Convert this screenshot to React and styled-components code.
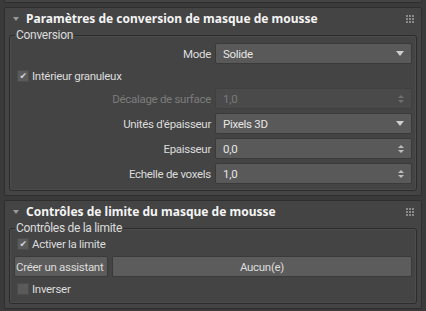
import styled, { createGlobalStyle } from "styled-components";

const Global = createGlobalStyle`
  html, body {
    margin: 0;
    padding: 0;
    background: #3a3a3a;
  }
  body {
    font-family: Roboto, "Noto Sans", sans-serif;
    font-size: 11.5px;
    letter-spacing: -0.3px;
    color: #dcdcdc;
  }
`;

const Page = styled.div`
  width: 426px;
  height: 311px;
  overflow: hidden;
  padding: 0 4px;
  box-sizing: border-box;
  display: flex;
  flex-direction: column;
  gap: 4px;
`;

const PrevEdge = styled.div`
  height: 2px;
  background: #444444;
  border: 1px solid #2e2e2e;
  border-top: none;
  border-radius: 0 0 2px 2px;
`;

const Rollout = styled.section`
  background: #444444;
  border: 1px solid #2e2e2e;
  border-radius: 2px;
  padding: 0 4px 4px;
`;

const Header = styled.div`
  display: flex;
  align-items: center;
  height: 19px;
  padding-top: 1px;
  gap: 7px;
  & > h2 {
    margin: 0;
    flex: 1;
    font-family: "Noto Sans", sans-serif;
    font-size: 12px;
    font-weight: 700;
    letter-spacing: 0;
    color: #f4f4f4;
  }
`;

const Arrow = styled.span`
  width: 0;
  height: 0;
  margin-left: 4px;
  border-left: 3px solid transparent;
  border-right: 3px solid transparent;
  border-top: 4px solid #9a9a9a;
`;

const Grip = styled.span`
  display: grid;
  grid-template-columns: repeat(3, 2px);
  gap: 1px;
  margin-right: 3px;
  & > i {
    width: 2px;
    height: 2px;
    background: #8a8a8a;
  }
`;

const Group = styled.fieldset`
  margin: 0;
  padding: 1px 4px 6px;
  border: 1px solid #2c2c2c;
  border-radius: 3px;
  box-shadow: inset 0 0 0 1px #4c4c4c;
  display: flex;
  flex-direction: column;
  gap: 4px;
  & > legend {
    padding: 0 1px;
    margin-left: 1px;
    line-height: 14px;
    font-size: 12px;
    color: #dcdcdc;
  }
`;

const Row = styled.div`
  display: grid;
  grid-template-columns: 1fr 197px;
  align-items: center;
  gap: 4px;
  height: 21px;
  & > label {
    text-align: right;
    color: ${(p) => (p.$disabled ? "#7c7c7c" : "#dcdcdc")};
  }
`;

const Field = styled.div`
  display: flex;
  align-items: center;
  justify-content: space-between;
  height: 21px;
  box-sizing: border-box;
  padding: 0 5px 0 7px;
  border-radius: 2px;
  background: ${(p) => (p.$disabled ? "#4a4a4a" : "#595959")};
  border: 1px solid ${(p) => (p.$disabled ? "#404040" : "#3a3a3a")};
  color: ${(p) => (p.$disabled ? "#7a7a7a" : "#e6e6e6")};
`;

const DropArrow = styled.span`
  width: 0;
  height: 0;
  border-left: 4px solid transparent;
  border-right: 4px solid transparent;
  border-top: 5px solid #cfcfcf;
  margin-right: 2px;
`;

const Spinner = styled.span`
  display: flex;
  flex-direction: column;
  gap: 2px;
  margin-right: 2px;
  & > i {
    width: 0;
    height: 0;
    border-left: 3px solid transparent;
    border-right: 3px solid transparent;
  }
  & > i:first-child {
    border-bottom: 3px solid ${(p) => (p.$disabled ? "#707070" : "#bdbdbd")};
  }
  & > i:last-child {
    border-top: 3px solid ${(p) => (p.$disabled ? "#707070" : "#bdbdbd")};
  }
`;

const Check = styled.label`
  display: flex;
  align-items: center;
  gap: 3px;
  height: 16px;
  padding-left: 3px;
  color: #dcdcdc;
`;

const Box = styled.span`
  width: 10px;
  height: 10px;
  background: #5a5a5a;
  border: 1px solid #4c4c4c;
  display: flex;
  align-items: center;
  justify-content: center;
  color: #d8d8d8;
  font-family: "DejaVu Sans", sans-serif;
  font-size: 9px;
  line-height: 1;
`;

const Buttons = styled.div`
  display: grid;
  grid-template-columns: 94px 1fr;
  gap: 4px;
`;

const Button = styled.button`
  height: 21px;
  border: 1px solid #3a3a3a;
  border-radius: 2px;
  background: #5c5c5c;
  color: #dcdcdc;
  font-family: inherit;
  font-size: 11.5px;
  letter-spacing: -0.3px;
  padding: 0;
  white-space: nowrap;
  overflow: hidden;
  text-align: ${(p) => (p.$left ? "left" : "center")};
  padding-left: ${(p) => (p.$left ? "1px" : "0")};
`;

const GripDots = () => (
  <Grip>
    {Array.from({ length: 9 }).map((_, i) => (
      <i key={i} />
    ))}
  </Grip>
);

const SpinField = ({ value, disabled }) => (
  <Field $disabled={disabled}>
    <span>{value}</span>
    <Spinner $disabled={disabled}>
      <i />
      <i />
    </Spinner>
  </Field>
);

const DropField = ({ value }) => (
  <Field>
    <span>{value}</span>
    <DropArrow />
  </Field>
);

const CheckItem = ({ checked, children }) => (
  <Check>
    <Box>{checked ? "✔" : ""}</Box>
    {children}
  </Check>
);

const App = () => (
  <>
    <Global />
    <Page>
      <PrevEdge />
      <Rollout>
        <Header>
          <Arrow />
          <h2>Paramètres de conversion de masque de mousse</h2>
          <GripDots />
        </Header>
        <Group>
          <legend>Conversion</legend>
          <Row>
            <label>Mode</label>
            <DropField value="Solide" />
          </Row>
          <CheckItem checked>Intérieur granuleux</CheckItem>
          <Row $disabled>
            <label>Décalage de surface</label>
            <SpinField value="1,0" disabled />
          </Row>
          <Row>
            <label>Unités d'épaisseur</label>
            <DropField value="Pixels 3D" />
          </Row>
          <Row>
            <label>Epaisseur</label>
            <SpinField value="0,0" />
          </Row>
          <Row>
            <label>Echelle de voxels</label>
            <SpinField value="1,0" />
          </Row>
        </Group>
      </Rollout>
      <Rollout>
        <Header>
          <Arrow />
          <h2>Contrôles de limite du masque de mousse</h2>
          <GripDots />
        </Header>
        <Group>
          <legend>Contrôles de la limite</legend>
          <CheckItem checked>Activer la limite</CheckItem>
          <Buttons>
            <Button $left>Créer un assistant</Button>
            <Button>Aucun(e)</Button>
          </Buttons>
          <CheckItem>Inverser</CheckItem>
        </Group>
      </Rollout>
    </Page>
  </>
);

export default App;
